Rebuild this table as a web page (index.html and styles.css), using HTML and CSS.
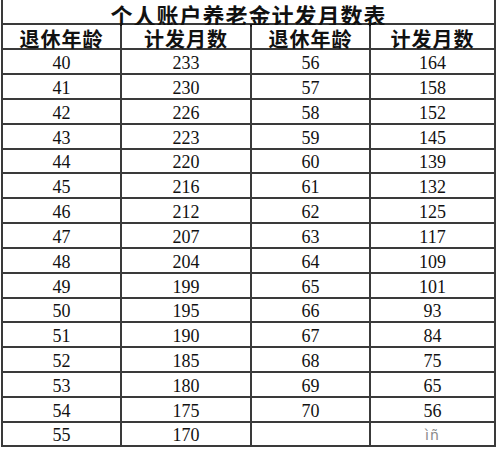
FILE: index.html
```html
<!DOCTYPE html>
<html lang="zh-CN">
<head>
<meta charset="utf-8">
<title>个人账户养老金计发月数表</title>
<link rel="stylesheet" href="styles.css">
</head>
<body>
<div class="sheet">
  <div class="title">个人账户养老金计发月数表</div>
  <div class="head">退休年龄</div><div class="head">计发月数</div><div class="head">退休年龄</div><div class="head">计发月数</div>
  <div class="num">40</div><div class="num">233</div><div class="num">56</div><div class="num">164</div>
  <div class="num">41</div><div class="num">230</div><div class="num">57</div><div class="num">158</div>
  <div class="num">42</div><div class="num">226</div><div class="num">58</div><div class="num">152</div>
  <div class="num">43</div><div class="num">223</div><div class="num">59</div><div class="num">145</div>
  <div class="num">44</div><div class="num">220</div><div class="num">60</div><div class="num">139</div>
  <div class="num">45</div><div class="num">216</div><div class="num">61</div><div class="num">132</div>
  <div class="num">46</div><div class="num">212</div><div class="num">62</div><div class="num">125</div>
  <div class="num">47</div><div class="num">207</div><div class="num">63</div><div class="num">117</div>
  <div class="num">48</div><div class="num">204</div><div class="num">64</div><div class="num">109</div>
  <div class="num">49</div><div class="num">199</div><div class="num">65</div><div class="num">101</div>
  <div class="num">50</div><div class="num">195</div><div class="num">66</div><div class="num">93</div>
  <div class="num">51</div><div class="num">190</div><div class="num">67</div><div class="num">84</div>
  <div class="num">52</div><div class="num">185</div><div class="num">68</div><div class="num">75</div>
  <div class="num">53</div><div class="num">180</div><div class="num">69</div><div class="num">65</div>
  <div class="num">54</div><div class="num">175</div><div class="num">70</div><div class="num">56</div>
  <div class="num">55</div><div class="num">170</div><div class="num"></div><div class="num"><span class="mark">ìñ</span></div>
</div>
</body>
</html>
```

FILE: styles.css
```css
html, body {
  margin: 0;
  padding: 0;
  background: #ffffff;
}

.sheet {
  display: grid;
  grid-template-columns: 117px 128px 117px 123px;
  grid-template-rows: 23px 23px 23px 23px 23px 23px 22px 23px 23px 23px 23px 23px 22px 23px 23px 23px 23px 22px;
  gap: 2px;
  padding: 0 2px 2px 2px;
  margin-left: 1px;
  width: max-content;
  background: #3a3a3a;
}

.sheet > div {
  background: #ffffff;
  display: flex;
  align-items: center;
  justify-content: center;
  color: #111111;
  box-sizing: border-box;
}

.title {
  grid-column: 1 / 5;
  font-family: "Noto Sans CJK SC", sans-serif;
  font-weight: 700;
  font-size: 22px;
  letter-spacing: 1px;
  line-height: 18px;
  padding-top: 5px;
}

.head {
  font-family: "Noto Sans CJK SC", sans-serif;
  font-weight: 700;
  font-size: 20px;
  letter-spacing: 1px;
  line-height: 19px;
  padding-top: 4px;
}

.num {
  font-family: "Liberation Serif", serif;
  font-size: 18px;
  line-height: 20px;
  padding-top: 2px;
}

.mark {
  font-family: "DejaVu Sans", sans-serif;
  font-size: 14px;
  line-height: 16px;
  color: #8a8a8a;
  letter-spacing: 1px;
}
```
